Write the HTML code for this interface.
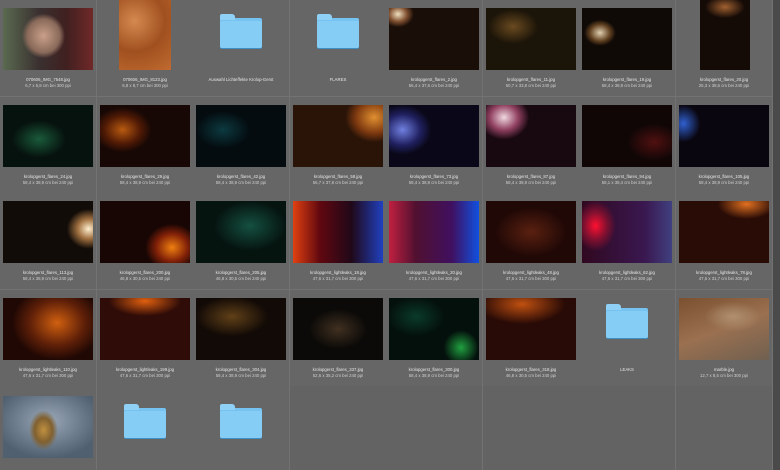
<!DOCTYPE html><html style="overflow:hidden;width:780px;height:470px"><head><style>
body{margin:0;width:780px;height:470px;background:#636363;position:relative;overflow:hidden;font-family:"Liberation Sans",sans-serif}
.c{position:absolute;width:96px;height:96px;border-right:1px solid #727272;border-bottom:1px solid #727272;background:#666}
.i{position:absolute;left:3px;top:8px;width:90px;height:62px}
.t{position:absolute;left:0;width:96px;text-align:center;color:#e6e6e6;font-size:4.3px;line-height:5px;top:77px;white-space:nowrap}
.t2{top:83px;color:#cfcfcf}
.f{position:absolute;left:27px;top:18px;width:42px;height:30px;background:#76c3f1;border-radius:2px;box-shadow:0 1px 0 #3f8ec4}
.f:before{content:"";position:absolute;left:0;top:-4px;width:15px;height:6px;background:#8fd0f6;border-radius:2px 3px 0 0}
.f:after{content:"";position:absolute;left:0;top:3px;width:42px;height:27px;background:#86cdf5;border-radius:2px}
</style></head><body>
<div class="c" style="left:0;top:0"><div class="i" style="background:radial-gradient(ellipse 30% 45% at 45% 45%,#c9a08a,#8a6a5a 60%,transparent 80%),linear-gradient(90deg,#5a6a50,#3a3030 40%,#402020 70%,#702828);"></div><div class="t">070606_IMG_7548.jpg</div><div class="t t2">6,7 x 5,8 cm bei 300 ppi</div></div>
<div class="c" style="left:97px;top:0"><div class="i" style="left:22px;top:0;width:52px;height:70px;background:radial-gradient(circle at 30% 30%,#d58a50,#a0501f 50%,#c06a30);"></div><div class="t">070606_IMG_8123.jpg</div><div class="t t2">6,8 x 8,7 cm bei 300 ppi</div></div>
<div class="c" style="left:193px;top:0"><div class="f"></div><div class="t">Auswahl Lichteffekte Krolop-Gerst</div></div>
<div class="c" style="left:290px;top:0"><div class="f"></div><div class="t">FLARES</div></div>
<div class="c" style="left:386px;top:0"><div class="i" style="background:radial-gradient(ellipse 25% 30% at 10% 10%,#f0e0c0,#805030 40%,transparent 70%),#1a0e08"></div><div class="t">krolopgerst_flares_2.jpg</div><div class="t t2">56,4 x 37,6 cm bei 240 ppi</div></div>
<div class="c" style="left:483px;top:0"><div class="i" style="background:radial-gradient(ellipse 40% 40% at 30% 30%,#6a4a20,transparent 70%),#1b1408"></div><div class="t">krolopgerst_flares_11.jpg</div><div class="t t2">50,7 x 33,8 cm bei 240 ppi</div></div>
<div class="c" style="left:579px;top:0"><div class="i" style="background:radial-gradient(ellipse 25% 30% at 20% 40%,#e0d0b0,#604020 45%,transparent 70%),#100a06"></div><div class="t">krolopgerst_flares_19.jpg</div><div class="t t2">58,4 x 38,9 cm bei 240 ppi</div></div>
<div class="c" style="left:676px;top:0"><div class="i" style="left:24px;top:0;width:50px;height:70px;background:radial-gradient(ellipse 50% 20% at 50% 10%,#a06030,transparent 80%),#140a06"></div><div class="t">krolopgerst_flares_20.jpg</div><div class="t t2">25,3 x 38,6 cm bei 240 ppi</div></div>

<div class="c" style="left:0;top:97px"><div class="i" style="background:radial-gradient(ellipse 40% 40% at 40% 55%,#1a5a3a,transparent 75%),#06120e"></div><div class="t">krolopgerst_flares_24.jpg</div><div class="t t2">58,4 x 38,9 cm bei 240 ppi</div></div>
<div class="c" style="left:97px;top:97px"><div class="i" style="background:radial-gradient(ellipse 40% 45% at 25% 40%,#b85a10,#501a05 50%,transparent 80%),#180805"></div><div class="t">krolopgerst_flares_29.jpg</div><div class="t t2">58,4 x 38,9 cm bei 240 ppi</div></div>
<div class="c" style="left:193px;top:97px"><div class="i" style="background:radial-gradient(ellipse 40% 40% at 30% 40%,#0c3a40,transparent 75%),#040c10"></div><div class="t">krolopgerst_flares_42.jpg</div><div class="t t2">58,4 x 38,9 cm bei 240 ppi</div></div>
<div class="c" style="left:290px;top:97px"><div class="i" style="background:radial-gradient(ellipse 40% 50% at 90% 20%,#e09030,#803a10 50%,transparent 80%),#2a1408"></div><div class="t">krolopgerst_flares_58.jpg</div><div class="t t2">56,7 x 37,8 cm bei 240 ppi</div></div>
<div class="c" style="left:386px;top:97px"><div class="i" style="background:radial-gradient(ellipse 40% 50% at 15% 40%,#7080e0,#202060 50%,transparent 80%),#0a0818"></div><div class="t">krolopgerst_flares_73.jpg</div><div class="t t2">58,4 x 38,9 cm bei 240 ppi</div></div>
<div class="c" style="left:483px;top:97px"><div class="i" style="background:radial-gradient(ellipse 35% 45% at 20% 20%,#f0d8e0,#904060 45%,transparent 80%),#180810"></div><div class="t">krolopgerst_flares_87.jpg</div><div class="t t2">58,4 x 38,9 cm bei 240 ppi</div></div>
<div class="c" style="left:579px;top:97px"><div class="i" style="background:radial-gradient(ellipse 40% 40% at 80% 60%,#501010,transparent 75%),#100606"></div><div class="t">krolopgerst_flares_94.jpg</div><div class="t t2">58,1 x 38,4 cm bei 240 ppi</div></div>
<div class="c" style="left:676px;top:97px"><div class="i" style="background:radial-gradient(ellipse 25% 40% at 5% 30%,#3060d0,transparent 75%),#0a0610"></div><div class="t">krolopgerst_flares_105.jpg</div><div class="t t2">58,4 x 38,9 cm bei 240 ppi</div></div>

<div class="c" style="left:0;top:193px"><div class="i" style="background:radial-gradient(ellipse 30% 40% at 95% 45%,#fff0d0,#a07040 40%,transparent 80%),#120c08"></div><div class="t">krolopgerst_flares_113.jpg</div><div class="t t2">58,4 x 38,9 cm bei 240 ppi</div></div>
<div class="c" style="left:97px;top:193px"><div class="i" style="background:radial-gradient(ellipse 35% 45% at 80% 75%,#f08010,#802008 50%,transparent 85%),#180604"></div><div class="t">krolopgerst_flares_200.jpg</div><div class="t t2">46,8 x 30,5 cm bei 240 ppi</div></div>
<div class="c" style="left:193px;top:193px"><div class="i" style="background:radial-gradient(ellipse 50% 50% at 60% 40%,#145040,transparent 80%),#061410"></div><div class="t">krolopgerst_flares_205.jpg</div><div class="t t2">46,8 x 30,5 cm bei 240 ppi</div></div>
<div class="c" style="left:290px;top:193px"><div class="i" style="background:linear-gradient(90deg,#e04010,#600810 30%,#200818 65%,#2040c0)"></div><div class="t">krolopgerst_lightleaks_18.jpg</div><div class="t t2">47,6 x 31,7 cm bei 300 ppi</div></div>
<div class="c" style="left:386px;top:193px"><div class="i" style="background:linear-gradient(90deg,#c02040,#501030 30%,#401060 70%,#1050e0)"></div><div class="t">krolopgerst_lightleaks_20.jpg</div><div class="t t2">47,6 x 31,7 cm bei 300 ppi</div></div>
<div class="c" style="left:483px;top:193px"><div class="i" style="background:radial-gradient(ellipse 50% 50% at 50% 50%,#5a2010,transparent 80%),#200806"></div><div class="t">krolopgerst_lightleaks_48.jpg</div><div class="t t2">47,6 x 31,7 cm bei 300 ppi</div></div>
<div class="c" style="left:579px;top:193px"><div class="i" style="background:radial-gradient(ellipse 25% 45% at 15% 40%,#ff1030,#801030 50%,transparent 90%),linear-gradient(90deg,#300820,#3a1850 70%,#404080)"></div><div class="t">krolopgerst_lightleaks_62.jpg</div><div class="t t2">47,6 x 31,7 cm bei 300 ppi</div></div>
<div class="c" style="left:676px;top:193px"><div class="i" style="background:radial-gradient(ellipse 40% 30% at 75% 5%,#e07020,transparent 80%),#2a0c06"></div><div class="t">krolopgerst_lightleaks_78.jpg</div><div class="t t2">47,6 x 31,7 cm bei 300 ppi</div></div>

<div class="c" style="left:0;top:290px"><div class="i" style="background:radial-gradient(ellipse 50% 60% at 60% 40%,#d06010,#602008 60%,#200804)"></div><div class="t">krolopgerst_lightleaks_110.jpg</div><div class="t t2">47,6 x 31,7 cm bei 300 ppi</div></div>
<div class="c" style="left:97px;top:290px"><div class="i" style="background:radial-gradient(ellipse 50% 30% at 50% 5%,#e06010,transparent 80%),#300c08"></div><div class="t">krolopgerst_lightleaks_199.jpg</div><div class="t t2">47,6 x 31,7 cm bei 300 ppi</div></div>
<div class="c" style="left:193px;top:290px"><div class="i" style="background:radial-gradient(ellipse 50% 40% at 40% 30%,#604018,transparent 80%),#120a06"></div><div class="t">krolopgerst_flares_304.jpg</div><div class="t t2">58,4 x 38,9 cm bei 240 ppi</div></div>
<div class="c" style="left:290px;top:290px"><div class="i" style="background:radial-gradient(ellipse 40% 40% at 50% 50%,#403020,transparent 80%),#0c0a08"></div><div class="t">krolopgerst_flares_337.jpg</div><div class="t t2">52,6 x 35,2 cm bei 240 ppi</div></div>
<div class="c" style="left:386px;top:290px"><div class="i" style="background:radial-gradient(circle at 80% 80%,#20a040,transparent 20%),radial-gradient(ellipse 40% 40% at 30% 30%,#0a3a2a,transparent 80%),#04100c"></div><div class="t">krolopgerst_flares_300.jpg</div><div class="t t2">58,4 x 38,9 cm bei 240 ppi</div></div>
<div class="c" style="left:483px;top:290px"><div class="i" style="background:radial-gradient(ellipse 60% 40% at 40% 10%,#c05010,transparent 80%),#280a06"></div><div class="t">krolopgerst_flares_318.jpg</div><div class="t t2">46,8 x 30,5 cm bei 240 ppi</div></div>
<div class="c" style="left:579px;top:290px"><div class="f"></div><div class="t">LEAKS</div></div>
<div class="c" style="left:676px;top:290px"><div class="i" style="background:radial-gradient(ellipse 40% 30% at 60% 30%,#b09070,transparent 80%),linear-gradient(160deg,#7a5030,#9a7050 50%,#706050)"></div><div class="t">marble.jpg</div><div class="t t2">12,7 x 8,5 cm bei 300 ppi</div></div>

<div class="c" style="left:0;top:386px"><div class="i" style="top:10px;height:62px;background:radial-gradient(ellipse 20% 40% at 45% 55%,#c09040,#806030 50%,transparent 80%),radial-gradient(ellipse 60% 60% at 50% 40%,#9aa8b8,#506070)"></div></div>
<div class="c" style="left:97px;top:386px"><div class="f" style="top:22px"></div></div>
<div class="c" style="left:193px;top:386px"><div class="f" style="top:22px"></div></div>
<div class="c" style="left:290px;top:386px;background:#636363"></div>
<div class="c" style="left:386px;top:386px;background:#636363"></div>
<div class="c" style="left:483px;top:386px;background:#636363"></div>
<div class="c" style="left:579px;top:386px;background:#636363"></div>
<div class="c" style="left:676px;top:386px;background:#636363"></div>
<div style="position:absolute;left:773px;top:0;width:7px;height:470px;background:#4a4a4a"></div>
</body></html>
